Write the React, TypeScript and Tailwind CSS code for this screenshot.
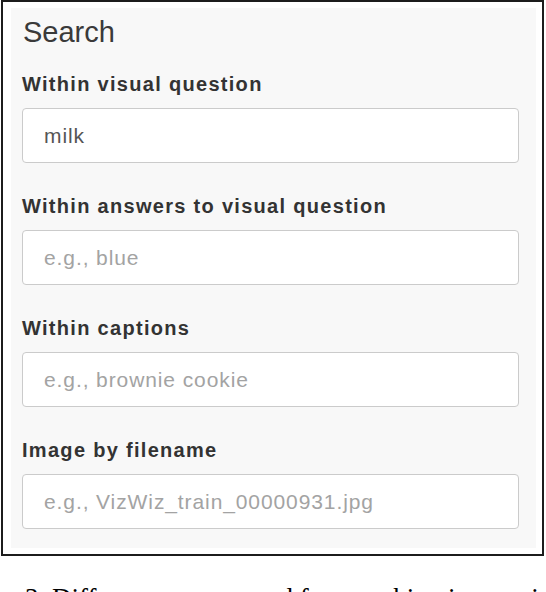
const fields = [
  { label: "Within visual question", value: "milk", placeholder: "" },
  { label: "Within answers to visual question", value: "", placeholder: "e.g., blue" },
  { label: "Within captions", value: "", placeholder: "e.g., brownie cookie" },
  { label: "Image by filename", value: "", placeholder: "e.g., VizWiz_train_00000931.jpg" },
];

export default function App() {
  return (
    <div className="bg-white w-[546px] h-[592px] overflow-hidden font-['Liberation_Sans',Arial,sans-serif]">
      <div className="ml-px w-[543px] h-[556px] border-2 border-[#1c1c1c] pl-[8px] pr-[6px] pt-[6px] pb-[6px]">
        <div className="h-full bg-[#f8f8f8] pl-[11px] pr-[17px] pt-[10px]">
          <h2 className="text-[29px] leading-none text-[#3a3a3a] pl-[1px]">Search</h2>
          <div className="mt-[26px] flex flex-col gap-[32px]">
            {fields.map((f) => (
              <div key={f.label} className="flex flex-col gap-[13px]">
                <label className="text-[20px] leading-[22px] font-bold text-[#333] tracking-[1.3px]">
                  {f.label}
                </label>
                <input
                  readOnly
                  value={f.value}
                  placeholder={f.placeholder}
                  className="h-[55px] w-full rounded-[4px] border border-[#cbcbcb] bg-white px-[21px] text-[21px] tracking-[0.9px] text-[#555] placeholder:text-[#a3a3a3] outline-none font-['Liberation_Sans',Arial,sans-serif]"
                />
              </div>
            ))}
          </div>
        </div>
      </div>
      <p className="mt-[26px] pl-[25px] text-[27px] leading-[32px] text-black whitespace-nowrap font-['Liberation_Serif','Times_New_Roman',serif]">
        3. Differences were used for searching images in
      </p>
    </div>
  );
}
